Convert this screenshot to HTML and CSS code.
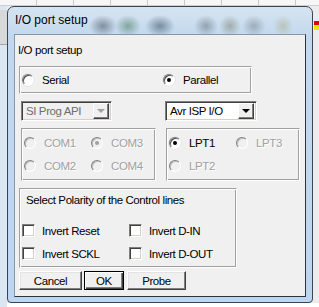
FILE: index.html
```html
<!DOCTYPE html>
<html lang="en">
<head>
    <meta charset="UTF-8">
    <title>I/O port setup</title>
    <link rel="stylesheet" href="styles.css">
</head>
<body>
    <div class="desk-top"></div>
    <div class="desk-tool"></div>
    <div class="flag"></div>

    <div class="window">
        <div class="titlebar">I/O port setup</div>

        <div class="client">
            <div class="heading">I/O port setup</div>

            <!-- port type -->
            <div class="group group-type">
                <label class="opt opt-wide"><span class="radio"></span>Serial</label>
                <label class="opt"><span class="radio checked"></span>Parallel</label>
            </div>

            <div class="row combos">
                <div class="combo combo-left disabled">
                    <span class="combo-text">SI Prog API</span>
                    <span class="combo-btn"><span class="arrow"></span></span>
                </div>
                <div class="combo combo-right">
                    <span class="combo-text">Avr ISP I/O</span>
                    <span class="combo-btn"><span class="arrow"></span></span>
                </div>
            </div>

            <div class="row ports">
                <div class="group port-group port-com">
                    <label class="opt disabled"><span class="radio"></span>COM1</label>
                    <label class="opt disabled"><span class="radio checked"></span>COM3</label>
                    <label class="opt disabled"><span class="radio"></span>COM2</label>
                    <label class="opt disabled"><span class="radio"></span>COM4</label>
                </div>
                <div class="group port-group port-lpt">
                    <label class="opt"><span class="radio checked"></span>LPT1</label>
                    <label class="opt disabled"><span class="radio"></span>LPT3</label>
                    <label class="opt disabled"><span class="radio"></span>LPT2</label>
                </div>
            </div>

            <!-- control line polarity -->
            <div class="group group-polarity">
                <div class="group-label">Select Polarity of the Control lines</div>
                <div class="checks">
                    <label class="chk"><span class="box"></span>Invert Reset</label>
                    <label class="chk"><span class="box"></span>Invert D-IN</label>
                    <label class="chk"><span class="box"></span>Invert SCKL</label>
                    <label class="chk"><span class="box"></span>Invert D-OUT</label>
                </div>
            </div>

            <div class="row buttons">
                <button class="btn btn-cancel">Cancel</button>
                <button class="btn btn-ok">OK</button>
                <button class="btn btn-probe">Probe</button>
            </div>
        </div>
    </div>
</body>
</html>
```

FILE: styles.css
```css
:root {
    --face: #f0f0f0;
    --shadow: #a0a0a0;
    --disabled: #a0a0a0;
}

body {
    margin: 0;
    width: 319px;
    height: 307px;
    overflow: hidden;
    position: relative;
    font-family: "Liberation Sans", Arial, sans-serif;
    font-size: 11.5px;
    letter-spacing: -0.4px;
    color: #000;
    background:
        linear-gradient(to right, #dbe6f3 0, #dbe6f3 7px, transparent 7px),
        linear-gradient(to bottom, #ececec 0, #ececec 303px, #fff 303px);
}

/* bits of the app window behind the dialog */
.desk-top {
    position: absolute;
    left: 0;
    top: 0;
    width: 319px;
    height: 5px;
    background: repeating-linear-gradient(to right, #f6f6f6 0, #f6f6f6 36px, #c8c8c8 36px, #c8c8c8 37px);
    border-bottom: 1px solid #cfcfcf;
}

.desk-tool {
    position: absolute;
    left: 0;
    top: 10px;
    width: 7px;
    height: 34px;
    background: #d8d8d8;
    border-bottom: 1px solid #a8a8a8;
}

.flag {
    position: absolute;
    left: 314px;
    top: 21px;
    width: 5px;
    height: 9px;
    background: linear-gradient(to bottom, #e00000 0, #e00000 4px, #f0e000 4px);
}

.window {
    position: relative;
    margin: 6px 0 0 7px;
    width: 304px;
    height: 295px;
    border: 1px solid #3a4452;
    border-radius: 7px 7px 4px 4px;
    background:
        radial-gradient(ellipse 14px 11px at 95px 19px, rgba(70, 80, 95, 0.55), transparent),
        radial-gradient(ellipse 13px 11px at 120px 19px, rgba(60, 110, 80, 0.5), transparent),
        radial-gradient(ellipse 15px 11px at 152px 19px, rgba(50, 75, 95, 0.55), transparent),
        radial-gradient(ellipse 12px 11px at 198px 19px, rgba(80, 90, 100, 0.45), transparent),
        radial-gradient(ellipse 11px 11px at 222px 19px, rgba(110, 115, 90, 0.45), transparent),
        radial-gradient(ellipse 12px 11px at 246px 19px, rgba(90, 100, 110, 0.4), transparent),
        radial-gradient(ellipse 10px 11px at 275px 19px, rgba(150, 150, 90, 0.35), transparent),
        linear-gradient(to bottom, #d6e4f1 0, #c2d8ee 30px, #bcd6f2 100%);
}

.titlebar {
    height: 27px;
    line-height: 27px;
    padding-left: 7px;
    font-size: 12px;
    letter-spacing: 0;
}

.client {
    margin: 0 6px;
    height: 261px;
    border: 1px solid #8a96a4;
    border-right-color: #2c3440;
    border-bottom-color: #2c3440;
    background: var(--face);
}

.heading {
    margin: 9px 0 0 3px;
    line-height: 13px;
}

.row {
    display: flex;
}

/* etched group frame */
.group {
    box-sizing: border-box;
    border: 1px solid var(--shadow);
    border-right-color: #fff;
    border-bottom-color: #fff;
    box-shadow: inset 1px 1px 0 #fff, inset -1px -1px 0 var(--shadow);
}

.group-type {
    margin: 9px 0 0 4px;
    width: 233px;
    height: 28px;
    display: flex;
    align-items: center;
    padding-left: 2px;
}

.opt {
    display: flex;
    align-items: center;
    height: 12px;
    line-height: 12px;
    white-space: nowrap;
}

.opt-wide {
    width: 141px;
}

.radio {
    box-sizing: border-box;
    width: 12px;
    height: 12px;
    margin-right: 8px;
    border-radius: 50%;
    border: 1px solid;
    border-color: #808080 #fff #fff #808080;
    background: #fff;
    box-shadow: inset 1px 1px 0 #505050, 0 0 0 0.5px #d8d8d8;
    display: flex;
    align-items: center;
    justify-content: center;
    flex: none;
}

.radio.checked::after {
    content: "";
    width: 4px;
    height: 4px;
    border-radius: 50%;
    background: #000;
}

.disabled {
    color: var(--disabled);
    text-shadow: 1px 1px 0 #fff;
}

.disabled .radio {
    background: var(--face);
    box-shadow: inset 1px 1px 0 #c0c0c0;
}

.disabled .radio.checked::after {
    background: #a0a0a0;
}

.combos {
    margin-top: 7px;
}

.combo {
    box-sizing: border-box;
    height: 20px;
    display: flex;
    align-items: center;
    border: 1px solid;
    border-color: #808080 #fff #fff #808080;
    box-shadow: inset 1px 1px 0 #404040, inset -1px -1px 0 #d4d0c8;
    background: #fff;
}

.combo-left {
    margin-left: 6px;
    width: 91px;
    background: var(--face);
}

.combo-right {
    margin-left: 53px;
    width: 92px;
}

.combo-text {
    flex: 1;
    padding-left: 4px;
    line-height: 14px;
}

.combo.disabled .combo-text {
    color: #6d6d6d;
    text-shadow: none;
}

.combo-btn {
    box-sizing: border-box;
    width: 16px;
    height: 16px;
    margin-right: 2px;
    background: var(--face);
    border: 1px solid;
    border-color: #fff #404040 #404040 #fff;
    box-shadow: inset -1px -1px 0 #808080;
    display: flex;
    align-items: center;
    justify-content: center;
}

.arrow {
    width: 0;
    height: 0;
    border-left: 4px solid transparent;
    border-right: 4px solid transparent;
    border-top: 4px solid #000;
}

.combo.disabled .arrow {
    border-top-color: #a0a0a0;
}

.ports {
    margin-top: 7px;
}

.port-group {
    height: 53px;
    display: grid;
    grid-template-columns: 67px 60px;
    row-gap: 11px;
    align-content: start;
    padding: 8px 0 0 2px;
}

.port-com {
    margin-left: 6px;
    width: 135px;
}

.port-lpt {
    margin-left: 10px;
    width: 134px;
}

.group-polarity {
    margin: 7px 0 0 4px;
    width: 218px;
    height: 80px;
    padding: 5px 0 0 2px;
}

.group-label {
    padding-left: 4px;
    line-height: 13px;
}

.checks {
    margin-top: 17px;
    display: grid;
    grid-template-columns: 107px 100px;
    row-gap: 10px;
}

.chk {
    display: flex;
    align-items: center;
    height: 13px;
    white-space: nowrap;
}

.box {
    box-sizing: border-box;
    width: 13px;
    height: 13px;
    margin-right: 7px;
    background: #fff;
    border: 1px solid;
    border-color: #808080 #fff #fff #808080;
    box-shadow: inset 1px 1px 0 #404040, inset -1px -1px 0 #d4d0c8;
    flex: none;
}

.buttons {
    margin: 3px 0 0 4px;
    gap: 2px;
}

.btn {
    box-sizing: border-box;
    height: 19px;
    padding: 0;
    font-family: inherit;
    font-size: 11.5px;
    letter-spacing: -0.4px;
    color: #000;
    background: var(--face);
    border: 1px solid;
    border-color: #fff #404040 #404040 #fff;
    box-shadow: inset -1px -1px 0 #808080, inset 1px 1px 0 #e3e3e3;
}

.btn-cancel {
    width: 63px;
}

.btn-ok {
    width: 40px;
    border: 1px solid #000;
    box-shadow: inset 1px 1px 0 #fff, inset -1px -1px 0 #404040, inset -2px -2px 0 #808080;
}

.btn-probe {
    margin-left: 1px;
    width: 59px;
}
```
